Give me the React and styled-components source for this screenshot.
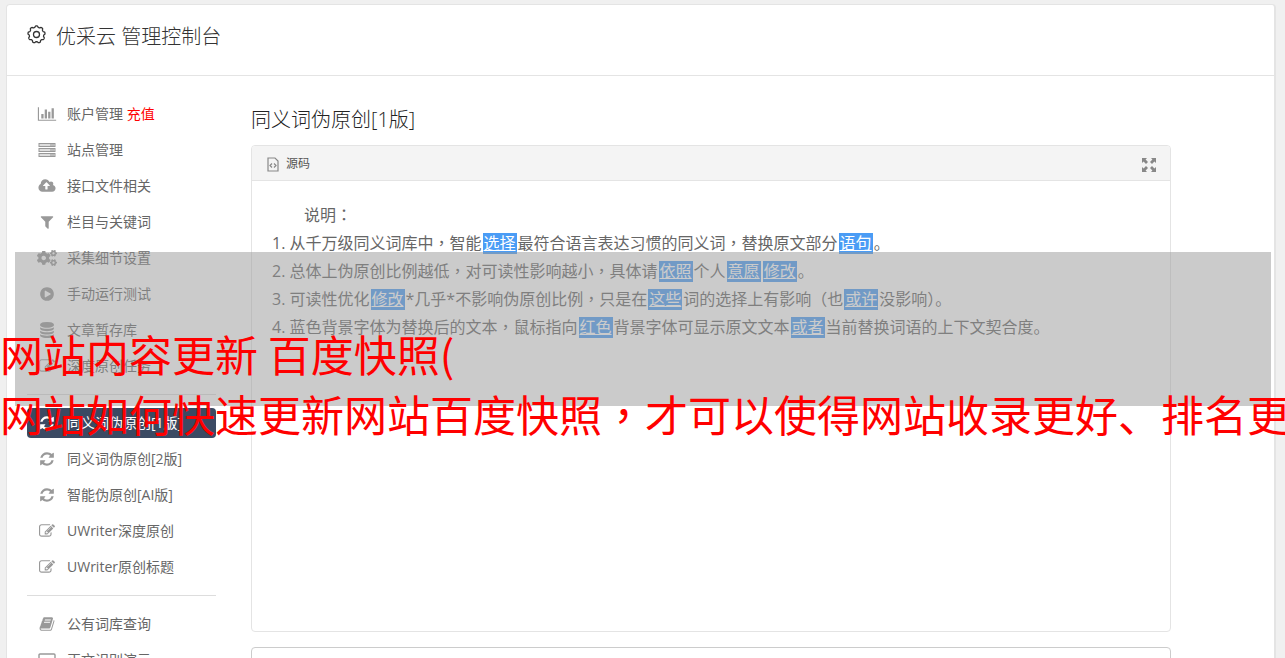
import React from "react";
import styled, { createGlobalStyle } from "styled-components";
import { FaCogs } from "react-icons/fa";

const Global = createGlobalStyle`
  * { box-sizing: border-box; }
  html { height: 100%; overflow: hidden; }
  body {
    margin: 0;
    height: 100%;
    overflow: hidden;
    background: #f0f0f0;
    color: #666;
    font: 14px/20px "Open Sans", "Noto Sans CJK SC", sans-serif;
  }
`;

const Card = styled.div`
  margin: 4px 9px 0 6px;
  background: #fff;
  border: 1px solid #e4e4e4;
  border-right-width: 2px;
  border-radius: 4px;
`;

const Header = styled.header`
  display: flex;
  align-items: flex-start;
  gap: 10px;
  height: 71px;
  padding: 16px 20px;
  border-bottom: 1px solid #e4e4e4;
  color: #333;
  svg { margin-top: 4px; }
`;

const AppTitle = styled.h1`
  margin: 0;
  font-size: 20px;
  line-height: 32px;
  font-weight: 300;
`;

const Body = styled.div`
  display: flex;
  gap: 35px;
  padding: 20px 103px 20px 20px;
`;

const Sidebar = styled.nav`
  flex: none;
  width: 189px;
`;

const NavLink = styled.a`
  display: flex;
  align-items: center;
  gap: 10px;
  height: 30px;
  margin: 3px 0 6px;
  padding: 0 10px;
  border-radius: 4px;
  text-decoration: none;
  white-space: nowrap;
  color: ${(p) => (p.$active ? "#fff" : "#666")};
  background: ${(p) => (p.$active ? "#3b4a63" : "transparent")};
  svg { flex: none; color: ${(p) => (p.$active ? "#fff" : "#999")}; }
`;

const Recharge = styled.span`
  color: #f00;
`;

const Rule = styled.hr`
  margin: 13px 0;
  border: 0;
  border-top: 1px solid #ddd;
`;

const Main = styled.main`
  flex: 1;
  min-width: 0;
`;

const PageTitle = styled.h2`
  margin: 8px 0 9px;
  font-size: 20px;
  line-height: 32px;
  font-weight: 300;
  color: #222;
`;

const Panel = styled.section`
  border: 1px solid #e4e4e4;
  border-radius: 4px;
`;

const PanelHead = styled.div`
  display: flex;
  align-items: center;
  gap: 6px;
  height: 35px;
  padding: 2px 14px 0;
  background: #f4f4f4;
  border-bottom: 1px solid #e4e4e4;
  border-radius: 3px 3px 0 0;
  font-size: 12px;
  color: #555;
`;

const ExpandButton = styled.button`
  display: flex;
  margin-left: auto;
  padding: 2px 0 0;
  border: 0;
  background: none;
  color: #888;
`;

const PanelBody = styled.div`
  min-height: 450px;
  padding: 20px;
  font-size: 16px;
  line-height: 28px;
`;

const Intro = styled.p`
  margin: 0;
  padding-left: 32px;
`;

const Steps = styled.ol`
  margin: 0;
  padding: 0;
  list-style: none;
`;

const Swap = styled.a`
  display: inline-block;
  height: 21px;
  margin: 0 1px;
  padding: 0 1px;
  line-height: 21px;
  text-decoration: underline;
  color: #fff;
  background: #4a9cf5;
`;

/* Punctuation set in the middle of its square */
const Mark = styled.span`
  font-family: "Noto Sans CJK TC", sans-serif;
  line-height: 1;
`;

const Output = styled.textarea`
  display: block;
  width: 100%;
  height: 120px;
  margin-top: 15px;
  border: 1px solid #ccc;
  border-radius: 4px;
  resize: none;
`;

const Shade = styled.div`
  position: absolute;
  top: 252px;
  left: 15px;
  right: 14px;
  height: 154px;
  background: rgba(151, 151, 151, 0.5);
`;

const Banner = styled.p`
  position: absolute;
  top: 323px;
  left: 0;
  right: 0;
  margin: 0;
  overflow: hidden;
  white-space: nowrap;
  font-family: "Noto Sans CJK SC", sans-serif;
  font-size: 43px;
  line-height: 60px;
  color: #f00;
`;

const BannerLine = styled.span`
  display: block;
`;

const shapes = {
  chart: [2048, "M640 896v512h-256v-512h256zm384-512v1024h-256v-1024h256zm1024 1152v128h-2048v-1536h128v1408h1920zm-640-896v768h-256v-768h256zm384-384v1152h-256v-1152h256z"],
  cloud: [1920, "M1280 864q0-14-9-23l-352-352q-9-9-23-9t-23 9l-351 351q-10 12-10 24 0 14 9 23t23 9h224v352q0 13 9.5 22.5t22.5 9.5h192q13 0 22.5-9.5t9.5-22.5v-352h224q13 0 22.5-9.5t9.5-22.5zm640 288q0 159-112.5 271.5t-271.5 112.5h-1088q-185 0-316.5-131.5t-131.5-316.5q0-130 70-240t188-165q-2-30-2-43 0-212 150-362t362-150q156 0 285.5 87t188.5 231q71-62 166-62 106 0 181 75t75 181q0 76-41 138 130 31 213.5 135.5t83.5 238.5z"],
  filter: [1792, "M1595 295q17 41-14 70l-493 493v742q0 42-39 59-13 5-25 5-27 0-45-19l-256-256q-19-19-19-45v-486l-493-493q-31-29-14-70 17-39 59-39h1280q42 0 59 39z"],
  play: [1792, "M896 128q209 0 385.5 103t279.5 279.5 103 385.5-103 385.5-279.5 279.5-385.5 103-385.5-103-279.5-279.5-103-385.5 103-385.5 279.5-279.5 385.5-103zm384 823q32-18 32-55t-32-55l-544-320q-31-19-64-1-32 19-32 56v640q0 37 32 56 16 8 32 8 17 0 32-9z"],
  database: [1792, "M896 768q237 0 443-43t325-127v170q0 69-103 128t-280 93.5-385 34.5-385-34.5-280-93.5-103-128v-170q119 84 325 127t443 43zm0 768q237 0 443-43t325-127v170q0 69-103 128t-280 93.5-385 34.5-385-34.5-280-93.5-103-128v-170q119 84 325 127t443 43zm0-384q237 0 443-43t325-127v170q0 69-103 128t-280 93.5-385 34.5-385-34.5-280-93.5-103-128v-170q119 84 325 127t443 43zm0-1152q208 0 385 34.5t280 93.5 103 128v128q0 69-103 128t-280 93.5-385 34.5-385-34.5-280-93.5-103-128v-128q0-69 103-128t280-93.5 385-34.5z"],
  edit: [1792, "M888 1184l116-116-152-152-116 116v56h96v96h56zm440-720q-16-16-33 1l-350 350q-17 17-1 33t33-1l350-350q17-17 1-33zm80 594v190q0 119-84.5 203.5t-203.5 84.5h-832q-119 0-203.5-84.5t-84.5-203.5v-832q0-119 84.5-203.5t203.5-84.5h832q63 0 117 25 15 7 18 23 3 17-9 29l-49 49q-14 14-32 8-23-6-45-6h-832q-66 0-113 47t-47 113v832q0 66 47 113t113 47h832q66 0 113-47t47-113v-126q0-13 9-22l64-64q15-15 35-7t20 29zm-96-738l288 288-672 672h-288v-288zm444 132l-92 92-288-288 92-92q28-28 68-28t68 28l152 152q28 28 28 68t-28 68z"],
  refresh: [1792, "M1639 1056q0 5-1 7-64 268-268 434.5t-478 166.5q-146 0-282.5-55t-243.5-157l-129 129q-19 19-45 19t-45-19-19-45v-448q0-26 19-45t45-19h448q26 0 45 19t19 45-19 45l-137 137q71 66 161 102t187 36q134 0 250-65t186-179q11-17 53-117 8-23 30-23h192q13 0 22.5 9.5t9.5 22.5zm25-800v448q0 26-19 45t-45 19h-448q-26 0-45-19t-19-45 19-45l138-138q-148-137-349-137-134 0-250 65t-186 179q-11 17-53 117-8 23-30 23h-199q-13 0-22.5-9.5t-9.5-22.5v-7q65-268 270-434.5t480-166.5q146 0 284 55.5t245 156.5l130-129q19-19 45-19t45 19 19 45z"],
  book: [1792, "M1703 478q40 57 18 129l-275 906q-19 64-76.5 107.5t-122.5 43.5h-923q-77 0-148.5-53.5t-99.5-131.5q-24-67-2-127 0-4 3-27t4-37q1-8-3-21.5t-3-19.5q2-11 8-21t16.5-23.5 16.5-23.5q23-38 45-91.5t30-91.5q3-10 .5-30t-.5-28q3-11 17-28t17-23q21-36 42-92t25-90q1-9-2.5-32t.5-28q4-13 22-30.5t22-22.5q19-26 42.5-84.5t27.5-96.5q1-8-3-25.5t-2-26.5q2-8 9-18t18-23 17-21q8-12 16.5-30.5t15-35 16-36 19.5-32 26.5-23.5 36-11.5 47.5 5.5l-1 3q38-9 51-9h761q74 0 114 56t18 130l-274 906q-36 119-71.5 153.5t-128.5 34.5h-869q-27 0-38 15-11 16-1 43 24 70 144 70h923q29 0 56-15.5t35-41.5l300-987q7-22 5-57 38 15 59 43zm-1064 2q-4 13 2 22.5t20 9.5h608q13 0 25.5-9.5t16.5-22.5l21-64q4-13-2-22.5t-20-9.5h-608q-13 0-25.5 9.5t-16.5 22.5zm-83 256q-4 13 2 22.5t20 9.5h608q13 0 25.5-9.5t16.5-22.5l21-64q4-13-2-22.5t-20-9.5h-608q-13 0-25.5 9.5t-16.5 22.5z"],
};

function Icon({ name }) {
  if (name === "cogs") return <FaCogs size={20} />;
  if (name === "server")
    return (
      <svg width="20" height="16" viewBox="0 0 20 16" fill="none" stroke="currentColor" aria-hidden="true">
        {[1.5, 6.5, 11.5].map((y) => (
          <g key={y}>
            <rect x="2" y={y} width="16" height="3" fill="#ddd" />
            <path d={`M13 ${y + 1.5}h4`} />
          </g>
        ))}
      </svg>
    );
  if (name === "monitor")
    return (
      <svg width="20" height="16" viewBox="0 0 20 16" fill="none" stroke="currentColor" strokeWidth="1.4" aria-hidden="true">
        <rect x="2" y="2" width="16" height="10" rx="1" />
        <path d="M7 15h6M10 12v3" />
      </svg>
    );
  const [w, d] = shapes[name];
  return (
    <svg width="20" height="16" viewBox={`0 0 ${w} 1792`} fill="currentColor" aria-hidden="true">
      <path d={d} />
    </svg>
  );
}

/* Outline of a cog with nine soft, shallow teeth */
const gearPath = (() => {
  const pts = [];
  for (let i = 0; i < 144; i++) {
    const a = (i * 2 * Math.PI) / 144;
    const r = 7.9 + 0.7 * Math.tanh(2 * Math.cos(9 * a));
    pts.push(`${(9.5 + r * Math.sin(a)).toFixed(2)} ${(9.5 - r * Math.cos(a)).toFixed(2)}`);
  }
  return `M${pts.join("L")}Z`;
})();

const groups = [
  [
    ["chart", "账户管理", "充值"],
    ["server", "站点管理"],
    ["cloud", "接口文件相关"],
    ["filter", "栏目与关键词"],
    ["cogs", "采集细节设置"],
    ["play", "手动运行测试"],
    ["database", "文章暂存库"],
    ["edit", "深度原创任务"],
  ],
  [
    ["refresh", "同义词伪原创[1版]"],
    ["refresh", "同义词伪原创[2版]"],
    ["refresh", "智能伪原创[AI版]"],
    ["edit", "UWriter深度原创"],
    ["edit", "UWriter原创标题"],
  ],
  [
    ["book", "公有词库查询"],
    ["monitor", "正文识别演示"],
  ],
];

const steps = [
  "1. 从千万级同义词库中，智能{选择}最符合语言表达习惯的同义词，替换原文部分{语句}。",
  "2. 总体上伪原创比例越低，对可读性影响越小，具体请{依照}个人{意愿}{修改}。",
  "3. 可读性优化{修改}*几乎*不影响伪原创比例，只是在{这些}词的选择上有影响（也{或许}没影响）。",
  "4. 蓝色背景字体为替换后的文本，鼠标指向{红色}背景字体可显示原文文本{或者}当前替换词语的上下文契合度。",
];

function Rich({ text }) {
  return text
    .split(/(\{[^}]+\}|[，：）])/)
    .filter(Boolean)
    .map((part, i) => {
      if (part[0] === "{") return <Swap key={i} href="#">{part.slice(1, -1)}</Swap>;
      if ("，：）".includes(part)) return <Mark key={i}>{part}</Mark>;
      return part;
    });
}

export default function App() {
  return (
    <>
      <Global />
      <Card>
        <Header>
          <svg width="19" height="19" viewBox="0 0 19 19" fill="none" stroke="currentColor" strokeWidth="1.3" strokeLinejoin="round" aria-hidden="true">
            <path d={gearPath} />
            <circle cx="9.5" cy="9.5" r="3" />
          </svg>
          <AppTitle>优采云 管理控制台</AppTitle>
        </Header>
        <Body>
          <Sidebar>
            {groups.map((items, g) => (
              <React.Fragment key={g}>
                {g > 0 && <Rule />}
                {items.map(([icon, label, extra]) => (
                  <NavLink key={label} href="#" $active={label === "同义词伪原创[1版]"}>
                    <Icon name={icon} />
                    <span>
                      {label}
                      {extra && <Recharge> {extra}</Recharge>}
                    </span>
                  </NavLink>
                ))}
              </React.Fragment>
            ))}
          </Sidebar>
          <Main>
            <PageTitle>同义词伪原创[1版]</PageTitle>
            <Panel>
              <PanelHead>
                <svg width="14" height="16" viewBox="0 0 14 16" fill="none" stroke="#888" strokeWidth="1.2" aria-hidden="true">
                  <path d="M2 2h7l3 3v10H2z" />
                  <path d="M6 7.5L4 9.5l2 2M8 7.5l2 2-2 2" />
                </svg>
                <span>源码</span>
                <ExpandButton aria-label="全屏">
                  <svg width="14" height="14" viewBox="0 0 14 14" fill="currentColor" aria-hidden="true">
                    <path d="M0 0h5L3.600 1.600 6 4 4 6 1.600 3.600 0 5zM14 0v5l-1.600-1.400L10 6 8 4l2.400-2.400L9 0zM0 14V9l1.600 1.400L4 8l2 2-2.400 2.400L5 14zM14 14H9l1.400-1.600L8 10l2-2 2.400 2.400L14 9z" />
                  </svg>
                </ExpandButton>
              </PanelHead>
              <PanelBody>
                <Intro><Rich text="说明：" /></Intro>
                <Steps>
                  {steps.map((text) => (
                    <li key={text}><Rich text={text} /></li>
                  ))}
                </Steps>
              </PanelBody>
            </Panel>
            <Output aria-label="输出" />
          </Main>
        </Body>
      </Card>
      <Shade />
      <Banner>
        <BannerLine>网站内容更新 百度快照(</BannerLine>
        <BannerLine><Rich text="网站如何快速更新网站百度快照，才可以使得网站收录更好、排名更" /></BannerLine>
      </Banner>
    </>
  );
}
